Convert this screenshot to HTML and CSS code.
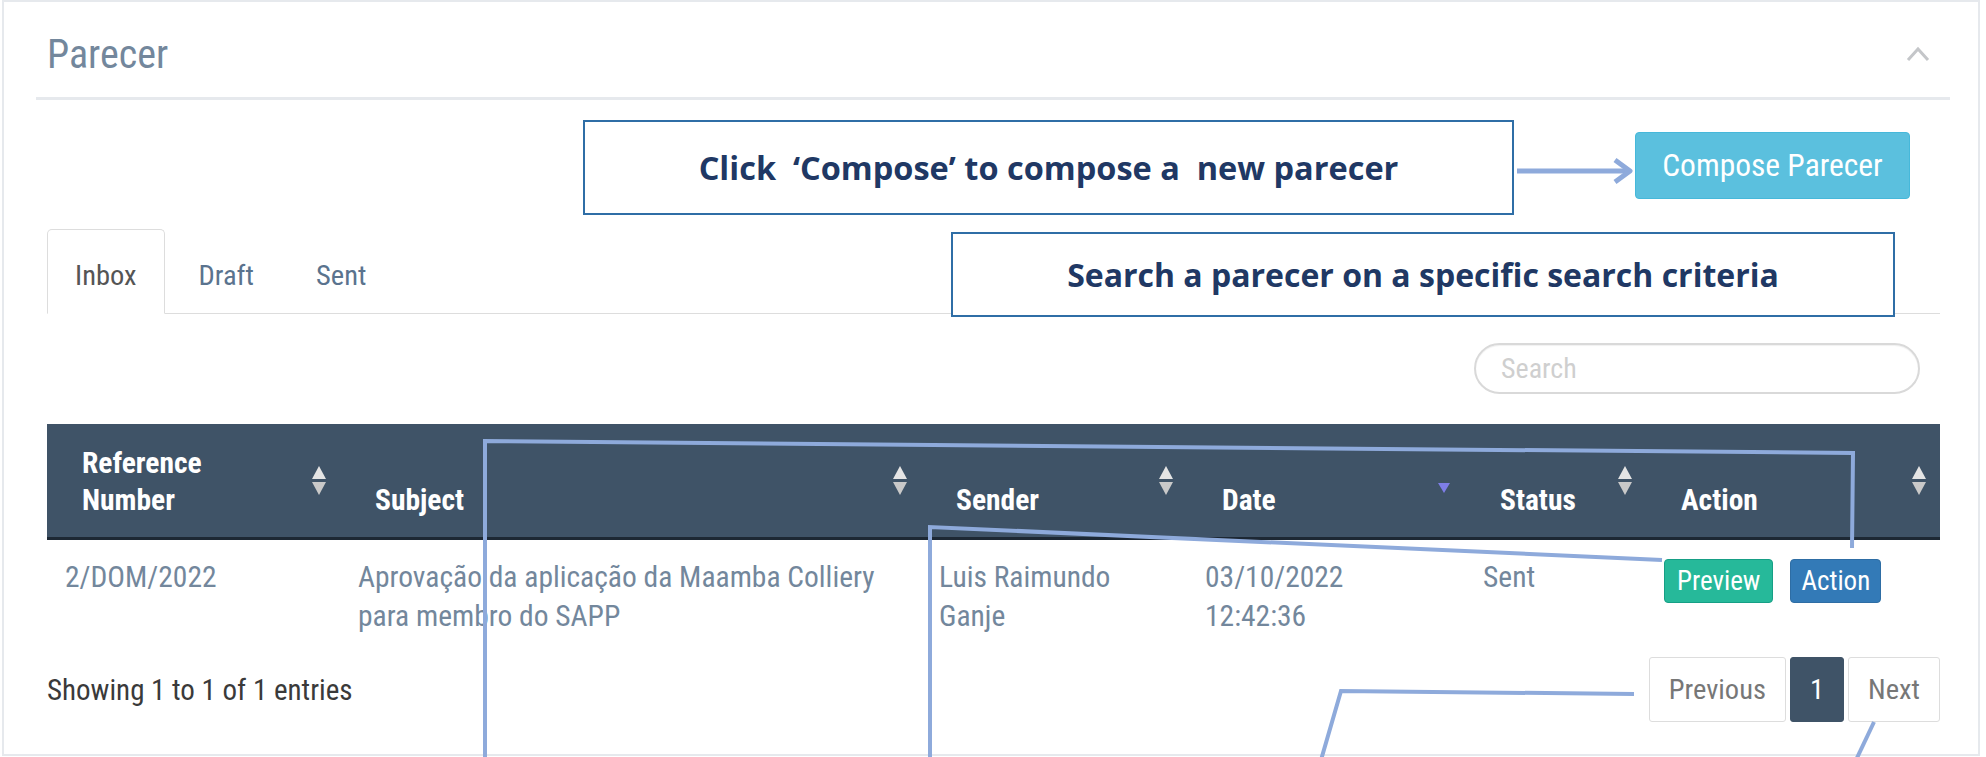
FILE: index.html
```html
<!DOCTYPE html>
<html lang="pt">
<head>
<meta charset="utf-8">
<title>Parecer</title>
<link rel="stylesheet" href="styles.css">
</head>
<body>
<div class="panel">
  <div class="x-title">
    <h2>Parecer</h2>
    <svg class="collapse-icon" width="24" height="16" viewBox="0 0 24 16"><polyline points="2,14 12,3 22,14" fill="none" stroke="#c4c6c9" stroke-width="3"/></svg>
  </div>

  <div class="compose-row">
    <div class="callout callout-compose">Click&nbsp; ‘Compose’ to compose a&nbsp; new parecer</div>
    <svg class="compose-arrow" width="121" height="95" viewBox="0 0 121 95">
      <line x1="3" y1="51" x2="114" y2="51" stroke="#8eaadb" stroke-width="5"/>
      <polyline points="101,40 116,51 101,62" fill="none" stroke="#8eaadb" stroke-width="5" stroke-linejoin="round"/>
    </svg>
    <button class="btn btn-info">Compose Parecer</button>
  </div>

  <div class="content">
    <ul class="tabs">
      <li class="tab active">Inbox</li>
      <li class="tab">Draft</li>
      <li class="tab">Sent</li>
    </ul>

    <div class="search-row">
      <input class="search-input" type="text" placeholder="Search">
    </div>

    <table class="data-table">
      <colgroup>
        <col class="c1"><col class="c2"><col class="c3"><col class="c4"><col class="c5"><col class="c6">
      </colgroup>
      <thead>
        <tr>
          <th>Reference<br>Number<svg class="sort" width="16" height="32" viewBox="0 0 16 32"><polygon points="8,1 15,14 1,14" fill="#e4e4e4"/><polygon points="1,17 15,17 8,30" fill="#c9c9c9"/></svg></th>
          <th>Subject<svg class="sort" width="16" height="32" viewBox="0 0 16 32"><polygon points="8,1 15,14 1,14" fill="#e4e4e4"/><polygon points="1,17 15,17 8,30" fill="#c9c9c9"/></svg></th>
          <th>Sender<svg class="sort" width="16" height="32" viewBox="0 0 16 32"><polygon points="8,1 15,14 1,14" fill="#e4e4e4"/><polygon points="1,17 15,17 8,30" fill="#c9c9c9"/></svg></th>
          <th>Date<svg class="sort" width="16" height="32" viewBox="0 0 16 32"><polygon points="2,18 14,18 8,28" fill="#7e7ee8"/></svg></th>
          <th>Status<svg class="sort" width="16" height="32" viewBox="0 0 16 32"><polygon points="8,1 15,14 1,14" fill="#e4e4e4"/><polygon points="1,17 15,17 8,30" fill="#c9c9c9"/></svg></th>
          <th>Action<svg class="sort" width="16" height="32" viewBox="0 0 16 32"><polygon points="8,1 15,14 1,14" fill="#e4e4e4"/><polygon points="1,17 15,17 8,30" fill="#c9c9c9"/></svg></th>
        </tr>
      </thead>
      <tbody>
        <tr>
          <td>2/DOM/2022</td>
          <td>Aprovação da aplicação da Maamba Colliery<br>para membro do SAPP</td>
          <td>Luis Raimundo<br>Ganje</td>
          <td>03/10/2022<br>12:42:36</td>
          <td>Sent</td>
          <td><div class="actions"><button class="btn-sm btn-success">Preview</button><button class="btn-sm btn-primary">Action</button></div></td>
        </tr>
      </tbody>
    </table>

    <div class="table-footer">
      <div class="info">Showing 1 to 1 of 1 entries</div>
      <div class="pagination">
        <span class="page">Previous</span>
        <span class="page current">1</span>
        <span class="page">Next</span>
      </div>
    </div>
  </div>
</div>

<div class="callout callout-search">Search a parecer on a specific search criteria</div>

<svg class="annotations" width="1986" height="757" viewBox="0 0 1986 757">
  <polyline points="485,760 485,441 1853,453 1852,548" fill="none" stroke="#8eaadb" stroke-width="4"/>
  <polyline points="930,760 930,527 1662,560" fill="none" stroke="#8eaadb" stroke-width="4"/>
  <polyline points="1321,760 1341,691 1634,694" fill="none" stroke="#8eaadb" stroke-width="4"/>
  <polyline points="1874,722 1856,760" fill="none" stroke="#8eaadb" stroke-width="4"/>
</svg>
</body>
</html>
```

FILE: styles.css
```css
html, body {
  margin: 0;
  padding: 0;
}

body {
  width: 1986px;
  height: 757px;
  overflow: hidden;
  position: relative;
  background: #fff;
  font-family: Roboto, "Liberation Sans", Arial, sans-serif;
  font-stretch: 87%;
  color: #73879c;
}

.panel {
  margin-left: 2px;
  width: 1978px;
  height: 756px;
  box-sizing: border-box;
  border: 2px solid #e6e9ed;
  padding: 0 28px 0 32px;
}

/* Title */
.x-title {
  display: flex;
  align-items: center;
  justify-content: space-between;
  padding: 32px 20px 21px 11px;
  border-bottom: 3px solid #e6e9ed;
}

.x-title h2 {
  margin: 0;
  font-weight: 400;
  font-size: 40px;
  line-height: 42px;
  color: #73879c;
}

.collapse-icon {
  display: block;
  margin-top: -2px;
}

/* Compose row */
.compose-row {
  display: flex;
  justify-content: flex-end;
  align-items: flex-start;
  padding: 20px 40px 0 0;
}

.callout {
  box-sizing: border-box;
  display: flex;
  align-items: center;
  justify-content: center;
  background: #fff;
  border: 2px solid #2f6ea6;
  font-family: "Open Sans", "Noto Sans", sans-serif;
  font-stretch: 100%;
  font-weight: 700;
  font-size: 32px;
  color: #203864;
  white-space: nowrap;
}

.callout-compose {
  width: 931px;
  height: 95px;
  font-size: 32.5px;
}

.callout-search {
  position: absolute;
  left: 951px;
  top: 232px;
  width: 944px;
  height: 85px;
}

.compose-arrow {
  display: block;
}

.btn,
.btn-sm,
.search-input {
  font-family: inherit;
  font-stretch: inherit;
}

.btn {
  cursor: pointer;
}

.btn-info {
  margin-top: 12px;
  width: 275px;
  height: 67px;
  background: #5bc0de;
  border: 1px solid #46b8da;
  border-radius: 4px;
  color: #fff;
  font-size: 31.5px;
  padding: 0;
}

/* Content area */
.content {
  margin: 0 10px 0 11px;
}

.tabs {
  list-style: none;
  margin: 14px 0 0 0;
  padding: 0;
  display: flex;
  border-bottom: 1px solid #dddddd;
}

.tab {
  font-size: 28.5px;
  line-height: 30px;
  padding: 31px 27px 22px;
  margin-right: 6px;
  margin-bottom: -1px;
  color: #5a738e;
  border: 1px solid transparent;
  border-radius: 5px 5px 0 0;
}

.tab.active {
  color: #555;
  background: #fff;
  border-color: #dddddd;
  border-bottom-color: #fff;
}

.search-row {
  display: flex;
  justify-content: flex-end;
  padding-right: 20px;
  margin-top: 29px;
}

.search-input {
  width: 446px;
  height: 51px;
  box-sizing: border-box;
  border: 2px solid #d9d9d9;
  border-radius: 26px;
  padding: 0 0 0 25px;
  font-size: 28px;
  color: #555;
  outline: none;
  box-shadow: inset 0 1px 1px rgba(0, 0, 0, 0.06);
}

.search-input::placeholder {
  color: #cfcfcf;
}

/* Table */
.data-table {
  margin-top: 30px;
  width: 100%;
  border-collapse: collapse;
  table-layout: fixed;
}

.c1 { width: 293px; }
.c2 { width: 581px; }
.c3 { width: 266px; }
.c4 { width: 278px; }
.c5 { width: 181px; }
.c6 { width: 294px; }

.data-table th {
  position: relative;
  background: #3f5367;
  color: #fff;
  font-weight: 700;
  font-size: 29.5px;
  line-height: 37px;
  text-align: left;
  vertical-align: bottom;
  padding: 21px 42px 18px 35px;
  border-bottom: 3px solid #1d2834;
}

.sort {
  position: absolute;
  right: 13px;
  top: 41px;
}

.data-table td {
  font-size: 29.5px;
  line-height: 39px;
  vertical-align: top;
  padding: 18px 18px 8px;
  color: #73879c;
}

.actions {
  display: flex;
  gap: 17px;
  padding-top: 1px;
}

.btn-sm {
  height: 44px;
  padding: 0 12px;
  border-radius: 4px;
  font-size: 27px;
  color: #fff;
  cursor: pointer;
}

.btn-success {
  background: #26b99a;
  border: 1px solid #169f85;
}

.btn-primary {
  background: #337ab7;
  border: 1px solid #2e6da4;
  padding: 0 10px;
}

/* Footer */
.table-footer {
  display: flex;
  justify-content: space-between;
  align-items: center;
  margin-top: 13px;
}

.info {
  font-size: 29px;
  color: #3a3a3a;
}

.pagination {
  display: flex;
}

.page {
  display: block;
  height: 65px;
  box-sizing: border-box;
  line-height: 63px;
  padding: 0 19px;
  font-size: 28.5px;
  color: #777;
  border: 1px solid #dddddd;
  border-radius: 3px;
  margin-left: 4px;
}

.page.current {
  background: #3f5367;
  border-color: #3f5367;
  color: #fff;
}

.annotations {
  position: absolute;
  left: 0;
  top: 0;
  pointer-events: none;
}
```
